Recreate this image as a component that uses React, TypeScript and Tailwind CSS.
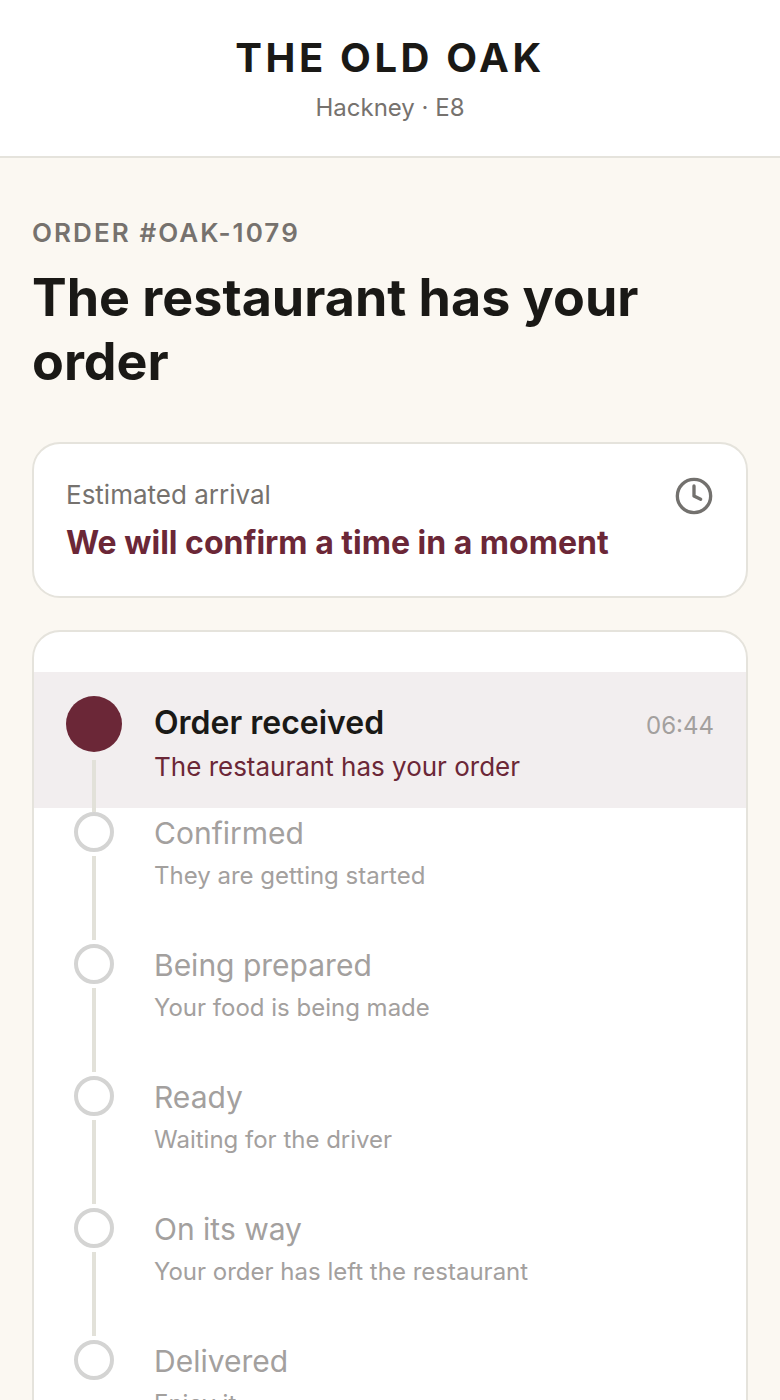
import { Clock } from 'lucide-react'

interface Step {
  title: string
  note: string
}

const upcoming: Step[] = [
  { title: 'Confirmed', note: 'They are getting started' },
  { title: 'Being prepared', note: 'Your food is being made' },
  { title: 'Ready', note: 'Waiting for the driver' },
  { title: 'On its way', note: 'Your order has left the restaurant' },
  { title: 'Delivered', note: 'Enjoy it' },
]

function UpcomingStep({ step, last }: { step: Step; last: boolean }) {
  return (
    <li className="flex gap-8 px-8">
      <div className="flex w-14 shrink-0 flex-col items-center pt-1">
        <span className="size-10 shrink-0 rounded-full border-4 border-[#d4d4d3] bg-white" />
        {!last && <span className="mt-1 w-1 flex-1 bg-[#e2e1d9]" />}
      </div>
      <div className={last ? 'pt-1' : 'pt-1 pb-[46px]'}>
        <p className="text-[30px] leading-[42px] text-[#a3a09e]">{step.title}</p>
        <p className="mt-1 text-2xl leading-[36px] text-[#a3a09e]">{step.note}</p>
      </div>
    </li>
  )
}

export default function App() {
  return (
    <div className="min-h-screen bg-[#fbf8f2] font-['Inter',sans-serif] text-[#1a1916]">
      <header className="border-b-2 border-[#e5e3dc] bg-white py-8 text-center">
        <p className="text-[40px] leading-[52px] font-bold tracking-[0.09em]">THE OLD OAK</p>
        <p className="mt-2 text-2xl leading-[32px] text-[#76726e]">Hackney · E8</p>
      </header>

      <main className="px-8 pt-14">
        <p className="text-[26px] leading-[38px] font-semibold tracking-[0.08em] text-[#76726e]">ORDER #OAK-1079</p>
        <h1 className="mt-[14px] text-[52px] leading-[64px] font-bold">The restaurant has your order</h1>

        <section className="mt-12 flex items-start justify-between rounded-[28px] border-2 border-[#e5e3dc] bg-white p-8">
          <div>
            <p className="text-[26px] leading-[38px] text-[#76726e]">Estimated arrival</p>
            <p className="mt-2 text-[32px] leading-[42px] font-bold text-[#6b2737]">We will confirm a time in a moment</p>
          </div>
          <Clock className="size-10 shrink-0 text-[#73716e]" />
        </section>

        <section className="mt-8 overflow-hidden rounded-[28px] border-2 border-[#e5e3dc] bg-white py-10">
          <ol>
            <li className="flex gap-8 bg-[#f2eeef] px-8 pt-6">
              <div className="flex w-14 shrink-0 flex-col items-center">
                <span className="size-14 shrink-0 rounded-full bg-[#6b2737]" />
                {/* connector runs down into the first open circle */}
                <span className="mt-2 -mb-1 w-1 flex-1 bg-[#e2e1d9]" />
              </div>
              <div className="flex-1 pt-1 pb-5">
                <div className="flex items-baseline justify-between">
                  <p className="text-[32px] leading-[46px] font-semibold">Order received</p>
                  <time className="text-2xl text-[#a3a09e]">06:44</time>
                </div>
                <p className="text-[26px] leading-[42px] text-[#6b2737]">The restaurant has your order</p>
              </div>
            </li>
            {upcoming.map((step, i) => (
              <UpcomingStep key={step.title} step={step} last={i === upcoming.length - 1} />
            ))}
          </ol>
        </section>
      </main>
    </div>
  )
}
